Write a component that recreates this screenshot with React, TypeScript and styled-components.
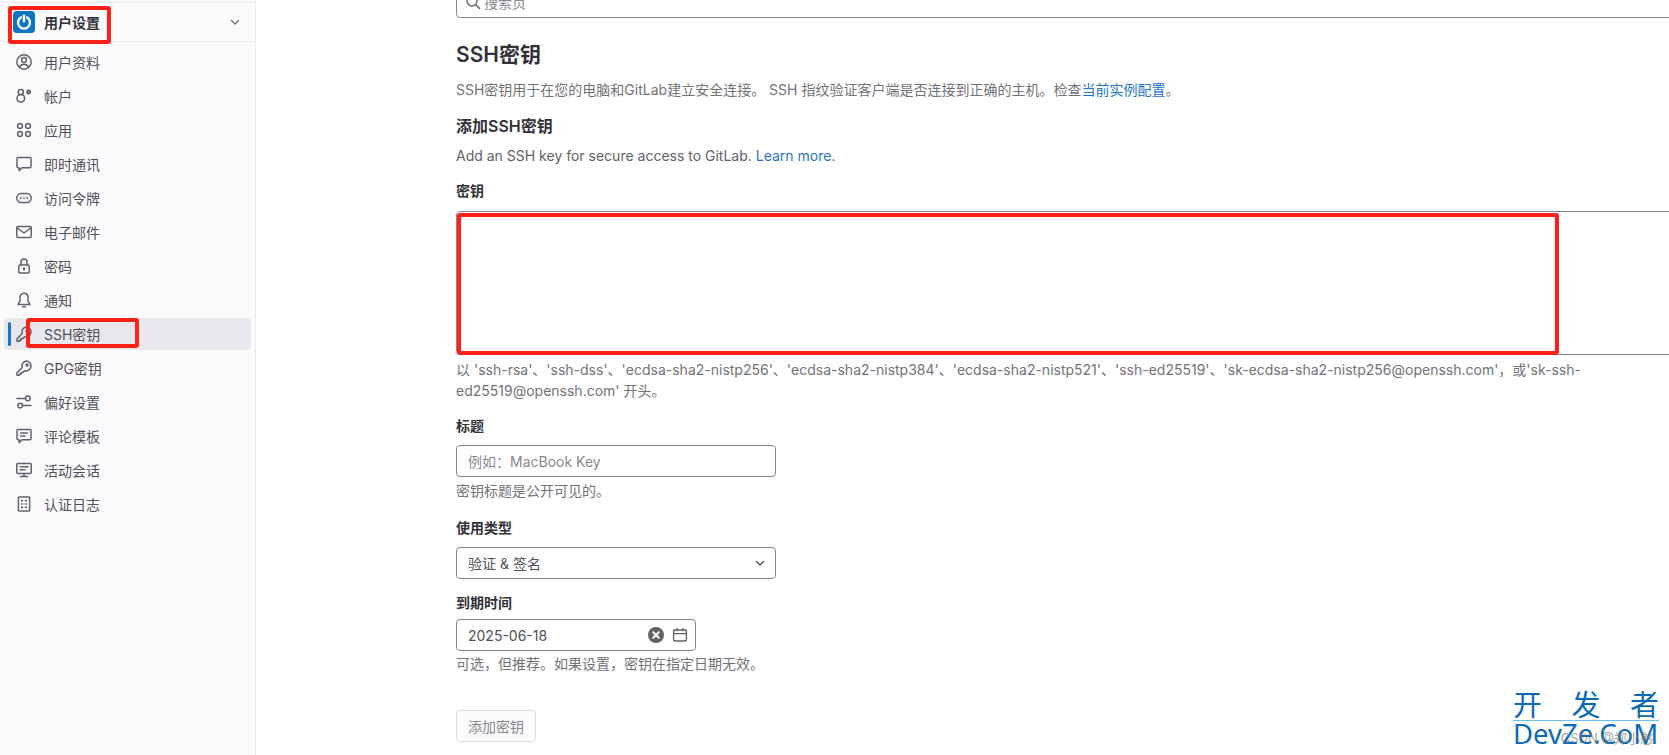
import { ReactElement, ReactNode } from 'react';
import styled, { createGlobalStyle } from 'styled-components';

const GlobalStyle = createGlobalStyle`
  html, body {
    margin: 0;
    height: 100%;
    overflow: hidden;
    background: #fff;
  }
  body {
    font-family: Inter, "Noto Sans CJK SC", sans-serif;
    font-size: 14px;
    color: #333238;
  }
  * { box-sizing: border-box; }
`;

const Page = styled.div`
  position: relative;
  display: flex;
  width: 1669px;
  height: 755px;
  overflow: hidden;
`;

const Sidebar = styled.aside`
  flex: 0 0 256px;
  padding-top: 2px;
  background: #fbfafd;
  border-right: 1px solid #ececef;
`;

const SidebarHeader = styled.div`
  display: flex;
  align-items: center;
  height: 40px;
  padding: 0 13px;
  gap: 8px;
  border-top: 1px solid #ececef;
  border-bottom: 1px solid #ececef;
  font-weight: 600;
  font-size: 14px;
  color: #333238;
`;

const Avatar = styled.span`
  display: flex;
  align-items: center;
  justify-content: center;
  width: 22px;
  height: 22px;
  border-radius: 4px;
  background: #0b76bd;
`;

const HeaderTitle = styled.span`
  flex: 1;
  padding-left: 1px;
`;

const HeaderChevron = styled.span`
  display: flex;
  margin-right: -1px;
  color: #737278;
`;

const NavList = styled.nav`
  display: flex;
  flex-direction: column;
  gap: 2px;
  padding: 4px 4px 0;
`;

const NavRow = styled.a<{ $active?: boolean }>`
  position: relative;
  display: flex;
  align-items: center;
  gap: 12px;
  height: 32px;
  padding-left: 12px;
  border-radius: 4px;
  font-size: 14px;
  color: #535158;
  background: ${(p) => (p.$active ? '#e8e7ec' : 'transparent')};

  &::before {
    content: '';
    display: ${(p) => (p.$active ? 'block' : 'none')};
    position: absolute;
    left: 4px;
    top: 4px;
    bottom: 4px;
    width: 3px;
    border-radius: 2px;
    background: #1f75cb;
  }
`;

const NavIcon = styled.svg`
  flex: 0 0 16px;
  width: 16px;
  height: 16px;
  fill: none;
  stroke: #626168;
  stroke-width: 1.5;
  stroke-linecap: round;
  stroke-linejoin: round;
`;

const Main = styled.main`
  flex: 1;
  min-width: 0;
  padding: 0 0 0 200px;
`;

const SearchBox = styled.div`
  display: flex;
  align-items: center;
  gap: 3px;
  width: 1240px;
  height: 32px;
  margin-top: -14px;
  padding-left: 8px;
  border: 1px solid #89888d;
  border-radius: 4px;
  font-size: 14px;
  color: #89888d;
`;

const Title = styled.h1`
  margin: 22px 0 0;
  font-size: 21px;
  line-height: 30px;
  font-weight: 600;
  color: #333238;
`;

const Lead = styled.p`
  margin: 10px 0 0;
  line-height: 20px;
  font-size: 14px;
  color: #737278;
`;

const Link = styled.a`
  color: #1f75cb;
`;

const Subtitle = styled.h2`
  margin: 14px 0 0;
  font-size: 16px;
  line-height: 24px;
  font-weight: 600;
  color: #333238;
`;

const AddNote = styled.p`
  margin: 8px 0 0;
  font-size: 14px;
  line-height: 20px;
  color: #626168;
`;

const Label = styled.label`
  display: block;
  font-size: 14px;
  line-height: 18px;
  font-weight: 600;
  color: #333238;
`;

const Field = styled.div<{ $top: number }>`
  margin-top: ${(p) => p.$top}px;
`;

const KeyArea = styled.div`
  width: 1240px;
  height: 144px;
  margin-top: 11px;
  border: 1px solid #89888d;
  border-radius: 4px;
  background: #fff;
`;

const Help = styled.p<{ $wide?: boolean; $top: number }>`
  margin: ${(p) => p.$top}px 0 0;
  max-width: ${(p) => (p.$wide ? '1144px' : '600px')};
  font-size: 14px;
  line-height: 21px;
  color: #737278;
`;

const TextInput = styled.input`
  display: block;
  width: 320px;
  height: 32px;
  margin-top: 10px;
  padding: 0 11px;
  border: 1px solid #89888d;
  border-radius: 4px;
  font: 14px Inter, "Noto Sans CJK SC", sans-serif;
  color: #333238;

  &::placeholder { color: #89888d; opacity: 1; }
`;

const Control = styled.div<{ $width: number; $gap: number }>`
  display: flex;
  align-items: center;
  width: ${(p) => p.$width}px;
  height: 32px;
  margin-top: ${(p) => p.$gap}px;
  padding: 0 7px 0 11px;
  border: 1px solid #89888d;
  border-radius: 4px;
  font-size: 14px;
  color: #535158;
`;

const ControlValue = styled.span`
  flex: 1;
`;

const ClearDot = styled.svg`
  width: 16px;
  height: 16px;
  margin-right: 8px;
`;

const SubmitButton = styled.button`
  display: block;
  width: 80px;
  height: 32px;
  margin-top: 36px;
  padding: 0;
  border: 1px solid #dcdcde;
  border-radius: 4px;
  background: #fbfafd;
  font: 14px Inter, "Noto Sans CJK SC", sans-serif;
  color: #89888d;
`;

/* hand-drawn red marks that sit on top of the screenshot */
const RedMark = styled.div<{ $x: number; $y: number; $w: number; $h: number }>`
  position: absolute;
  left: ${(p) => p.$x}px;
  top: ${(p) => p.$y}px;
  width: ${(p) => p.$w}px;
  height: ${(p) => p.$h}px;
  border: 4px solid #ff2016;
  border-radius: 3px;
  pointer-events: none;
`;

const Watermark = styled.div`
  position: absolute;
  left: 1513px;
  top: 688px;
  width: 146px;
  color: #0a6ab6;
`;

const WatermarkTop = styled.div`
  display: flex;
  justify-content: space-between;
  height: 33px;
  border-bottom: 1px solid #66c4f2;
  font: 29px/30px "Noto Sans CJK SC", sans-serif;
`;

const WatermarkBottom = styled.div`
  font: 27.5px/26px "Noto Sans", sans-serif;
  white-space: nowrap;
`;

const WatermarkCredit = styled.div`
  position: absolute;
  right: 16px;
  top: 729px;
  font-size: 13px;
  line-height: 18px;
  color: rgba(120, 120, 120, 0.7);
`;

const Icon = ({ children }: { children: ReactNode }): ReactElement => (
  <NavIcon viewBox="0 0 16 16">{children}</NavIcon>
);

const Chevron = (): ReactElement => (
  <svg width="16" height="16" viewBox="0 0 16 16" fill="none" stroke="currentColor" strokeWidth="1.4" strokeLinecap="round" strokeLinejoin="round">
    <path d="M4.5 6.5 8 10l3.5-3.5" />
  </svg>
);

const navItems: { label: string; icon: ReactNode; active?: boolean }[] = [
  {
    label: '用户资料',
    icon: (
      <>
        <circle cx="8" cy="8" r="7.2" />
        <circle cx="8" cy="6" r="2.4" />
        <path d="M3.6 13.2c.8-2 2.4-3 4.4-3s3.6 1 4.4 3" />
      </>
    ),
  },
  {
    label: '帐户',
    icon: (
      <>
        <circle cx="4.8" cy="4" r="2.6" />
        <path d="M4.8 6.6c-2.4 0-3.8 1.8-3.8 4 0 2.2 1.2 3.4 3.8 3.4s3.8-1.2 3.8-3.4c0-2.2-1.4-4-3.8-4z" />
        <circle cx="12.6" cy="4" r="1.5" strokeWidth="2" strokeDasharray="1.6 .5" />
      </>
    ),
  },
  {
    label: '应用',
    icon: (
      <>
        <circle cx="4" cy="4" r="2.4" />
        <circle cx="12" cy="4" r="2.4" />
        <circle cx="4" cy="12" r="2.4" />
        <circle cx="12" cy="12" r="2.4" />
      </>
    ),
  },
  {
    label: '即时通讯',
    icon: <path d="M2.2 1.4h11.6c.7 0 1.2.5 1.2 1.2v8c0 .7-.5 1.2-1.2 1.2H6l-3 2.8v-2.8h-.8c-.7 0-1.2-.5-1.2-1.2v-8c0-.7.5-1.2 1.2-1.2z" />,
  },
  {
    label: '访问令牌',
    icon: (
      <>
        <rect x="0.8" y="3.6" width="14.4" height="8.8" rx="4.4" />
        <path d="M4.8 8h.01M8 8h.01M11.2 8h.01" strokeWidth="1.8" />
      </>
    ),
  },
  {
    label: '电子邮件',
    icon: (
      <>
        <rect x="0.8" y="2.4" width="14.4" height="11.2" rx="1.4" />
        <path d="M1.2 4 8 9l6.8-5" />
      </>
    ),
  },
  {
    label: '密码',
    icon: (
      <>
        <rect x="2.8" y="7" width="10.4" height="8" rx="1.2" />
        <path d="M5 7V4a3 3 0 0 1 6 0v3" />
        <path d="M8 10.4v1.2" strokeWidth="2.2" />
      </>
    ),
  },
  {
    label: '通知',
    icon: (
      <>
        <path d="M8 1.2c-2.6 0-4 2-4 4.4v3.6L2 12.4h12l-2-3.2V5.6c0-2.4-1.4-4.4-4-4.4z" />
        <path d="M6.6 14.8h2.8" />
      </>
    ),
  },
  {
    label: 'SSH密钥',
    active: true,
    icon: (
      <>
        <path d="M10 1a5 5 0 1 1-1.4 9.8L6.8 12.6H5v1.6H3.4v1H1v-2.5l5.2-5.2A5 5 0 0 1 10 1z" />
        <circle cx="11" cy="5" r="1" />
      </>
    ),
  },
  {
    label: 'GPG密钥',
    icon: (
      <>
        <path d="M10 1a5 5 0 1 1-1.4 9.8L6.8 12.6H5v1.6H3.4v1H1v-2.5l5.2-5.2A5 5 0 0 1 10 1z" />
        <circle cx="11" cy="5" r="1" />
      </>
    ),
  },
  {
    label: '偏好设置',
    icon: (
      <>
        <circle cx="11.8" cy="4.4" r="2.3" />
        <circle cx="4.2" cy="11.6" r="2.3" />
        <path d="M1 4.4h8.2M6.8 11.6H15" />
      </>
    ),
  },
  {
    label: '评论模板',
    icon: (
      <>
        <path d="M2.2 1.4h11.6c.7 0 1.2.5 1.2 1.2v8c0 .7-.5 1.2-1.2 1.2H6l-3 2.8v-2.8h-.8c-.7 0-1.2-.5-1.2-1.2v-8c0-.7.5-1.2 1.2-1.2z" />
        <path d="M4.6 5h6.8M4.6 8h4.4" />
      </>
    ),
  },
  {
    label: '活动会话',
    icon: (
      <>
        <rect x="0.8" y="1.6" width="14.4" height="10" rx="1" />
        <path d="M4 4.8h8M4 7.8h5M8 11.6v2.6M4.4 14.6h7.2" />
      </>
    ),
  },
  {
    label: '认证日志',
    icon: (
      <>
        <rect x="2.4" y="1" width="11.2" height="14" rx="1" />
        <path d="M5.6 4.6h.9M9.4 4.6h1M5.6 8h.9M9.4 8h1M5.6 11.4h.9M9.4 11.4h1" strokeWidth="1.6" />
      </>
    ),
  },
];

export default function App(): ReactElement {
  return (
    <Page>
      <GlobalStyle />
      <Sidebar>
        <SidebarHeader>
          <Avatar>
            <svg width="16" height="16" viewBox="0 0 16 16" fill="none" stroke="#fff" strokeWidth="2.4" strokeLinecap="round">
              <path d="M5 3.4a6 6 0 1 0 6 0" />
              <path d="M8 1.6v5.6" />
            </svg>
          </Avatar>
          <HeaderTitle>用户设置</HeaderTitle>
          <HeaderChevron>
            <Chevron />
          </HeaderChevron>
        </SidebarHeader>
        <NavList>
          {navItems.map((item) => (
            <NavRow key={item.label} $active={item.active}>
              <Icon>{item.icon}</Icon>
              {item.label}
            </NavRow>
          ))}
        </NavList>
      </Sidebar>

      <Main>
        <SearchBox>
          <svg width="16" height="16" viewBox="0 0 16 16" fill="none" stroke="#626168" strokeWidth="1.4" strokeLinecap="round">
            <circle cx="7" cy="7" r="5" />
            <path d="m11 11 3.6 3.6" />
          </svg>
          搜索页
        </SearchBox>
        <Title>SSH密钥</Title>
        <Lead>
          SSH密钥用于在您的电脑和GitLab建立安全连接。 SSH 指纹验证客户端是否连接到正确的主机。检查
          <Link>当前实例配置</Link>。
        </Lead>
        <Subtitle>添加SSH密钥</Subtitle>
        <AddNote>
          Add an SSH key for secure access to GitLab. <Link>Learn more</Link>.
        </AddNote>

        <Field $top={16}>
          <Label>密钥</Label>
          <KeyArea />
          <Help $wide $top={4}>
            以 'ssh-rsa'、'ssh-dss'、'ecdsa-sha2-nistp256'、'ecdsa-sha2-nistp384'、'ecdsa-sha2-nistp521'、'ssh-ed25519'、'sk-ecdsa-sha2-nistp256@openssh.com'，或'sk-ssh-ed25519@openssh.com' 开头。
          </Help>
        </Field>

        <Field $top={16}>
          <Label>标题</Label>
          <TextInput placeholder="例如：MacBook Key" readOnly />
          <Help $top={3}>密钥标题是公开可见的。</Help>
        </Field>

        <Field $top={18}>
          <Label>使用类型</Label>
          <Control $width={320} $gap={10}>
            <ControlValue>验证 &amp; 签名</ControlValue>
            <Chevron />
          </Control>
        </Field>

        <Field $top={15}>
          <Label>到期时间</Label>
          <Control $width={240} $gap={7}>
            <ControlValue>2025-06-18</ControlValue>
            <ClearDot viewBox="0 0 16 16">
              <circle cx="8" cy="8" r="8" fill="#626168" />
              <path d="M5.2 5.2l5.6 5.6M10.8 5.2l-5.6 5.6" stroke="#fff" strokeWidth="2" strokeLinecap="round" />
            </ClearDot>
            <svg width="16" height="16" viewBox="0 0 16 16" fill="none" stroke="#626168" strokeWidth="1.3" strokeLinecap="round">
              <rect x="1.6" y="3" width="12.8" height="11" rx="1" />
              <path d="M1.6 6.6h12.8M5 1.4v2.4M11 1.4v2.4" />
            </svg>
          </Control>
          <Help $top={2}>可选，但推荐。如果设置，密钥在指定日期无效。</Help>
        </Field>

        <SubmitButton>添加密钥</SubmitButton>
      </Main>

      <RedMark $x={8} $y={6} $w={103} $h={38} />
      <RedMark $x={26} $y={318} $w={113} $h={30} />
      <RedMark $x={457} $y={213} $w={1102} $h={142} />

      <Watermark>
        <WatermarkTop>
          <span>开</span>
          <span>发</span>
          <span>者</span>
        </WatermarkTop>
        <WatermarkBottom>DevZe.CoM</WatermarkBottom>
      </Watermark>
      <WatermarkCredit>CSDN @郑小憨</WatermarkCredit>
    </Page>
  );
}
